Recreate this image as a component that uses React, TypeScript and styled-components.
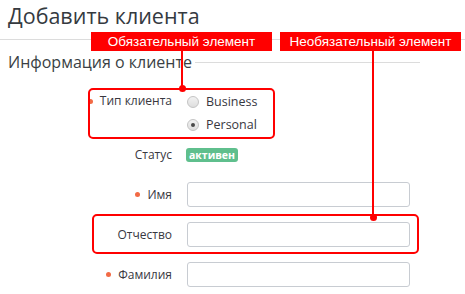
import React from "react";
import styled, { createGlobalStyle } from "styled-components";

const Global = createGlobalStyle`
  html, body { margin: 0; padding: 0; background: #fff; }
  body { font-family: "Open Sans", "Noto Sans", sans-serif; color: #3a3a3a; }
  * { box-sizing: border-box; }
`;

const Page = styled.div`
  position: relative;
  width: 465px;
  height: 294px;
  overflow: hidden;
  background: #fff;
`;

const Title = styled.h1`
  margin: 0;
  padding: 1px 8px 8px;
  font-size: 21.5px;
  line-height: 30px;
  font-weight: 400;
  color: #353a3f;
  border-bottom: 1px solid #dcdcdc;
`;

const Section = styled.section`
  padding: 11px 0 0 8px;
  width: 420px;
`;

const SectionHeader = styled.div`
  display: flex;
  align-items: center;
  gap: 3px;
  font-size: 16px;
  line-height: 22px;
  color: #3a3f44;
`;

const Rule = styled.div`
  flex: 1;
  height: 1px;
  background: #dcdcdc;
`;

const Form = styled.div`
  display: flex;
  flex-direction: column;
  margin-top: 17px;
`;

const Row = styled.div<{ $h: number; $mt?: number }>`
  display: grid;
  grid-template-columns: 164px 223px;
  column-gap: 15px;
  align-items: center;
  height: ${(p) => p.$h}px;
  margin-top: ${(p) => p.$mt ?? 0}px;
`;

const Label = styled.div<{ $top?: boolean }>`
  display: flex;
  align-items: center;
  justify-content: flex-end;
  gap: 7px;
  font-size: 12px;
  line-height: 22px;
  color: #38383f;
  align-self: ${(p) => (p.$top ? "start" : "center")};
`;

const ReqDot = styled.span`
  width: 5px;
  height: 5px;
  border-radius: 50%;
  background: #f26a45;
`;

const RadioGroup = styled.div`
  display: flex;
  flex-direction: column;
  align-self: start;
`;

const RadioOption = styled.label`
  display: flex;
  align-items: center;
  gap: 7px;
  height: 23px;
  font-size: 12.5px;
  color: #38383f;
`;

const RadioCircle = styled.span<{ $checked?: boolean }>`
  width: 12px;
  height: 12px;
  border-radius: 50%;
  border: 1px solid #c4c4c4;
  background: linear-gradient(#f2f2f2, #dedede);
  display: flex;
  align-items: center;
  justify-content: center;
  &::after {
    content: "";
    display: ${(p) => (p.$checked ? "block" : "none")};
    width: 4px;
    height: 4px;
    border-radius: 50%;
    background: #4a4a4a;
  }
`;

const Badge = styled.span`
  justify-self: start;
  margin-left: -1px;
  display: inline-block;
  height: 14px;
  padding: 0 3px;
  border-radius: 3px;
  background: #5fbf8d;
  color: #fff;
  font-size: 10.5px;
  font-weight: 700;
  line-height: 14px;
`;

const Input = styled.input`
  width: 223px;
  height: 25px;
  border: 1px solid #c8ccd2;
  border-radius: 3px;
  background: #fff;
  outline: none;
`;

const Tag = styled.div<{ $x: number }>`
  position: absolute;
  top: 32px;
  left: ${(p) => p.$x}px;
  width: 181px;
  height: 19px;
  background: #ff0000;
  color: #fff;
  font-family: "Liberation Sans", Arial, sans-serif;
  font-size: 13.5px;
  line-height: 19px;
  text-align: center;
`;

const Frame = styled.div<{ $x: number; $y: number; $w: number; $h: number }>`
  position: absolute;
  left: ${(p) => p.$x}px;
  top: ${(p) => p.$y}px;
  width: ${(p) => p.$w}px;
  height: ${(p) => p.$h}px;
  border: 2px solid #ff0000;
  border-radius: 5px;
  pointer-events: none;
`;

const Stem = styled.div<{ $x: number; $y1: number; $y2: number }>`
  position: absolute;
  left: ${(p) => p.$x}px;
  top: ${(p) => p.$y1}px;
  width: 2px;
  height: ${(p) => p.$y2 - p.$y1}px;
  background: #ff0000;
`;

const Pin = styled.div<{ $x: number; $y: number }>`
  position: absolute;
  left: ${(p) => p.$x - 3.5}px;
  top: ${(p) => p.$y - 3.5}px;
  width: 7px;
  height: 7px;
  border-radius: 50%;
  background: #ff0000;
`;

export default function App() {
  return (
    <Page>
      <Global />
      <Title>Добавить клиента</Title>
      <Section>
        <SectionHeader>
          <span>Информация о клиенте</span>
          <Rule />
        </SectionHeader>
        <Form>
          <Row $h={47}>
            <Label $top>
              <ReqDot />
              Тип клиента
            </Label>
            <RadioGroup>
              <RadioOption>
                <RadioCircle />
                Business
              </RadioOption>
              <RadioOption>
                <RadioCircle $checked />
                Personal
              </RadioOption>
            </RadioGroup>
          </Row>
          <Row $h={24} $mt={6}>
            <Label>Статус</Label>
            <Badge>активен</Badge>
          </Row>
          <Row $h={25} $mt={15}>
            <Label>
              <ReqDot />
              Имя
            </Label>
            <Input />
          </Row>
          <Row $h={25} $mt={15}>
            <Label>Отчество</Label>
            <Input />
          </Row>
          <Row $h={25} $mt={15}>
            <Label>
              <ReqDot />
              Фамилия
            </Label>
            <Input />
          </Row>
        </Form>
      </Section>

      <Frame $x={88} $y={88} $w={187} $h={51} />
      <Frame $x={92} $y={214} $w={327} $h={40} />
      <Stem $x={181} $y1={51} $y2={88} />
      <Stem $x={372} $y1={51} $y2={217} />
      <Pin $x={182} $y={88.5} />
      <Pin $x={373} $y={217.5} />
      <Tag $x={91}>Обязательный элемент</Tag>
      <Tag $x={280}>Необязательный элемент</Tag>
    </Page>
  );
}
